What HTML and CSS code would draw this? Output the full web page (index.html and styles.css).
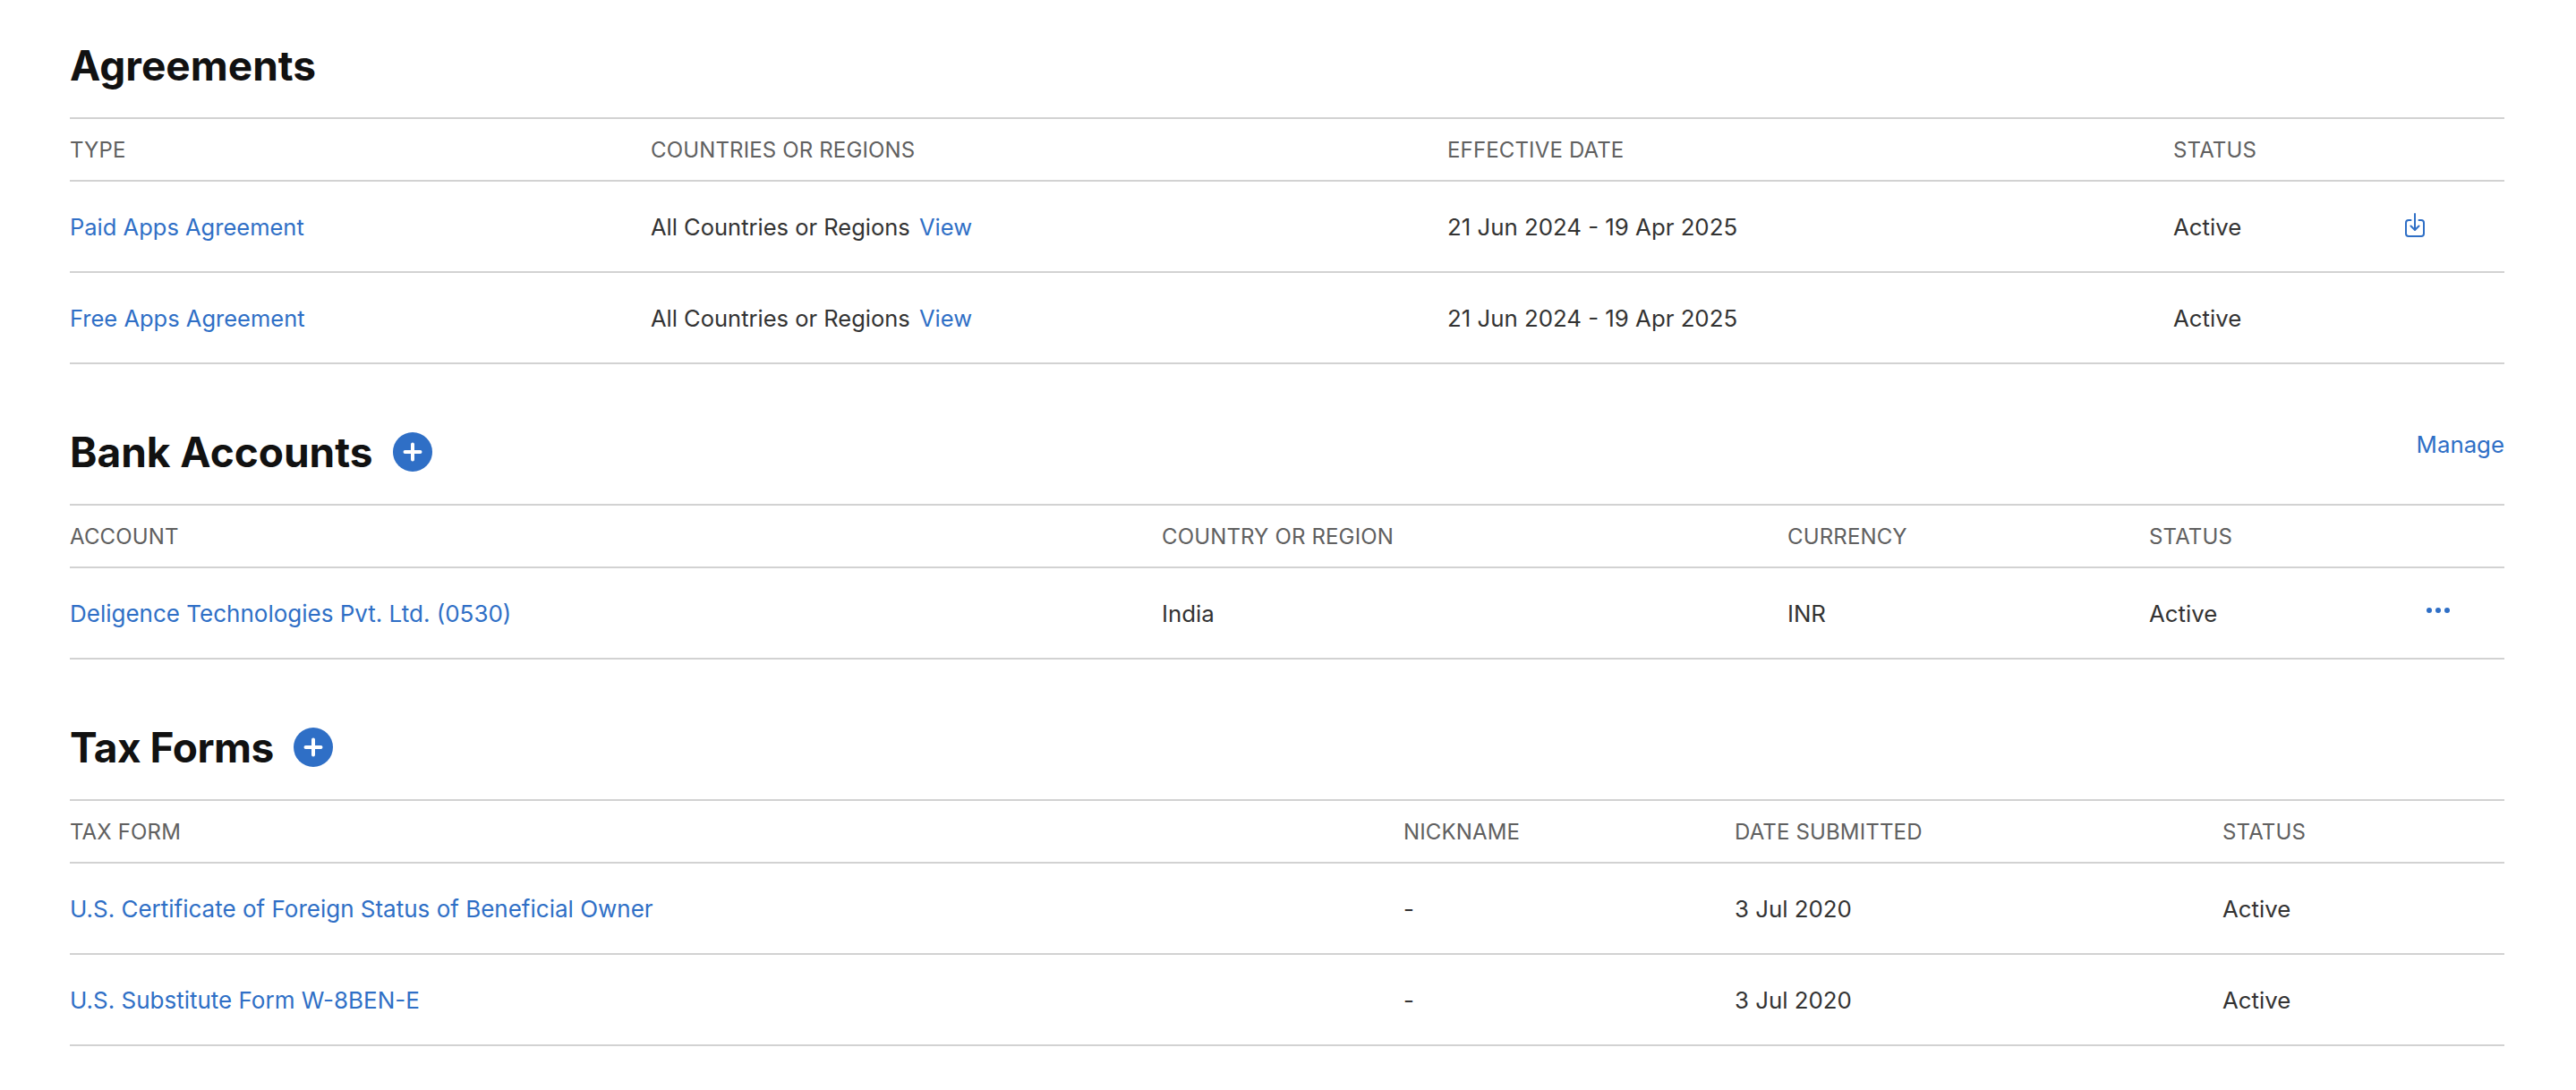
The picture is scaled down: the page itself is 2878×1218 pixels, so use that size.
FILE: index.html
```html
<!DOCTYPE html>
<html>
  <head>
    <title>Agreements, Tax, and Banking</title>
    <link rel="stylesheet" href="styles.css">
  </head>

  <body>
    <div class="section first">
      <div class="head">
        <h2>Agreements</h2>
      </div>
      <div class="row labels agreements">
        <div>TYPE</div>
        <div>COUNTRIES OR REGIONS</div>
        <div>EFFECTIVE DATE</div>
        <div>STATUS</div>
        <div></div>
      </div>
      <div class="row agreements">
        <div><a href="#">Paid Apps Agreement</a></div>
        <div class="regions">All Countries or Regions <a class="view" href="#">View</a></div>
        <div>21 Jun 2024 - 19 Apr 2025</div>
        <div>Active</div>
        <div>
          <a class="icon download" href="#">
            <svg width="22" height="27" viewBox="0 0 22 27" fill="none" stroke="#2f6fc6" stroke-width="2" stroke-linecap="round" stroke-linejoin="round">
              <path d="M6.500 8H4a3 3 0 0 0-3 3v12a3 3 0 0 0 3 3h14a3 3 0 0 0 3-3V11a3 3 0 0 0-3-3h-2.500"/>
              <path d="M11 1v17.500"/>
              <path d="M6.500 14.500l4.500 4.500 4.500-4.500"/>
            </svg>
          </a>
        </div>
      </div>
      <div class="row agreements">
        <div><a href="#">Free Apps Agreement</a></div>
        <div class="regions">All Countries or Regions <a class="view" href="#">View</a></div>
        <div>21 Jun 2024 - 19 Apr 2025</div>
        <div>Active</div>
        <div></div>
      </div>
    </div>

    <div class="section">
      <div class="head">
        <h2>Bank Accounts</h2>
        <a class="add" href="#">
          <svg width="44" height="44" viewBox="0 0 44 44">
            <circle cx="22" cy="22" r="22" fill="#2f6fc6"/>
            <path d="M22 13.500v17M13.500 22h17" stroke="#fff" stroke-width="4" stroke-linecap="round"/>
          </svg>
        </a>
        <a class="manage" href="#">Manage</a>
      </div>
      <div class="row labels banks">
        <div>ACCOUNT</div>
        <div>COUNTRY OR REGION</div>
        <div>CURRENCY</div>
        <div>STATUS</div>
        <div></div>
      </div>
      <div class="row banks">
        <div><a href="#">Deligence Technologies Pvt. Ltd. (0530)</a></div>
        <div>India</div>
        <div>INR</div>
        <div>Active</div>
        <div>
          <a class="icon dots" href="#"><span></span><span></span><span></span></a>
        </div>
      </div>
    </div>

    <div class="section">
      <div class="head">
        <h2 class="tight">Tax Forms</h2>
        <a class="add" href="#">
          <svg width="44" height="44" viewBox="0 0 44 44">
            <circle cx="22" cy="22" r="22" fill="#2f6fc6"/>
            <path d="M22 13.500v17M13.500 22h17" stroke="#fff" stroke-width="4" stroke-linecap="round"/>
          </svg>
        </a>
      </div>
      <div class="row labels taxes">
        <div>TAX FORM</div>
        <div>NICKNAME</div>
        <div>DATE SUBMITTED</div>
        <div>STATUS</div>
      </div>
      <div class="row taxes">
        <div><a href="#">U.S. Certificate of Foreign Status of Beneficial Owner</a></div>
        <div>-</div>
        <div>3 Jul 2020</div>
        <div>Active</div>
      </div>
      <div class="row taxes">
        <div><a href="#">U.S. Substitute Form W-8BEN-E</a></div>
        <div>-</div>
        <div>3 Jul 2020</div>
        <div>Active</div>
      </div>
    </div>
  </body>
</html>
```

FILE: styles.css
```css
body {
  margin: 0;
  padding: 0 80px 49px 78px;
  background-color: #fff;
  color: #333;
  font-family: Inter, "Liberation Sans", sans-serif;
  font-size: 25.8px;
}

a {
  color: #2f6fc6;
  text-decoration: none;
}

/* Section titles */
.section {
  margin-top: 40px;
}

.section.first {
  margin-top: 15px;
}

.head {
  display: flex;
  align-items: center;
  height: 116px;
}

h2 {
  margin: 0;
  color: #111;
  font-size: 46px;
  font-weight: 700;
}

h2.tight {
  letter-spacing: -0.5px;
}

.add {
  display: flex;
  margin-left: 22px;
}

.manage {
  margin-left: auto;
  margin-bottom: 18px;
}

/* Table rows */
.row {
  display: grid;
  align-items: center;
  height: 102px;
  box-sizing: border-box;
  border-top: 2px solid #d2d2d2;
}

.row a {
  font-size: 26px;
}

.section .row:last-child {
  height: 104px;
  border-bottom: 2px solid #d2d2d2;
}

.row.labels {
  height: 70px;
  color: #606060;
  font-size: 24px;
  letter-spacing: 0.15px;
}

.agreements {
  grid-template-columns: 649px 890px 811px 259px 1fr;
}

.agreements a,
.regions {
  font-size: 25.5px;
}

.banks {
  grid-template-columns: 1220px 699px 404px 310px 1fr;
}

.taxes {
  grid-template-columns: 1490px 370px 545px 1fr;
}

.view {
  margin-left: 3px;
}

.icon {
  display: flex;
}

.download {
  margin-bottom: 4px;
}

.dots {
  gap: 4px;
  margin-bottom: 6px;
}

.dots span {
  width: 6px;
  height: 6px;
  border-radius: 50%;
  background-color: #2f6fc6;
}
```
